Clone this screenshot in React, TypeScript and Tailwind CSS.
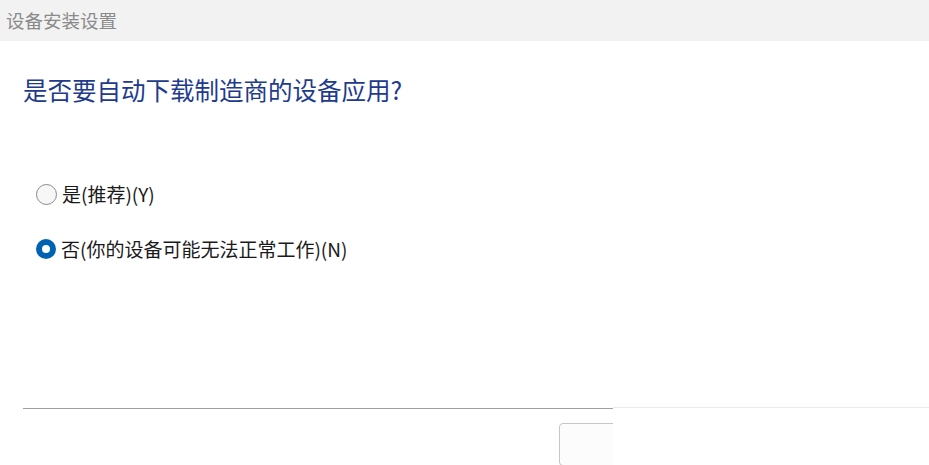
import React from "react";

const font = { fontFamily: '"Noto Sans CJK SC", "Noto Sans", sans-serif' };

function Radio({ checked }: { checked: boolean }) {
  if (checked) {
    return (
      <span className="flex h-[20px] w-[20px] shrink-0 items-center justify-center rounded-full bg-[#0063b1]">
        <span className="h-[8px] w-[8px] rounded-full bg-white" />
      </span>
    );
  }
  return (
    <span className="h-[21px] w-[21px] shrink-0 rounded-full border border-[#8a8a8a] bg-[#f7f7f7]" />
  );
}

export default function App() {
  const options = [
    { label: "是(推荐)(Y)", checked: false },
    { label: "否(你的设备可能无法正常工作)(N)", checked: true },
  ];

  return (
    <div className="flex h-[465px] w-[929px] flex-col overflow-hidden bg-white" style={font}>
      {/* Title bar */}
      <div className="flex h-[41px] shrink-0 items-center bg-[#f2f2f2] pl-[6px]">
        <span className="text-[18.5px] leading-none text-[#8a8a8a]">设备安装设置</span>
      </div>

      {/* Body */}
      <div className="flex flex-1 flex-col pl-[23px]">
        <h1 className="mt-[34px] text-[24.5px] leading-[30px] text-[#1e3b8c]">
          是否要自动下载制造商的设备应用?
        </h1>

        <div className="mt-[77px] flex flex-col gap-[31px] pl-[13px]">
          {options.map((o, i) => (
            <label key={i} className="flex items-center gap-[5px] text-[19px] leading-[24px] text-[#1a1a1a]">
              <Radio checked={o.checked} />
              <span>{o.label}</span>
            </label>
          ))}
        </div>
      </div>

      {/* Footer */}
      <div className="relative h-[57px] shrink-0">
        <div className="mr-[316px] ml-[23px] h-[1px] bg-[#a0a0a0]" />
        <div className="flex justify-start pl-[559px] pt-[14px]">
          <button className="h-[43px] w-[110px] rounded-[4px] border border-[#c6c6c6] bg-[#fcfcfc]" />
        </div>
        {/* white cover over the right part */}
        <div className="absolute top-[-1px] left-[613px] right-0 bottom-0 border-t border-[#ebebeb] bg-white" />
      </div>
    </div>
  );
}
